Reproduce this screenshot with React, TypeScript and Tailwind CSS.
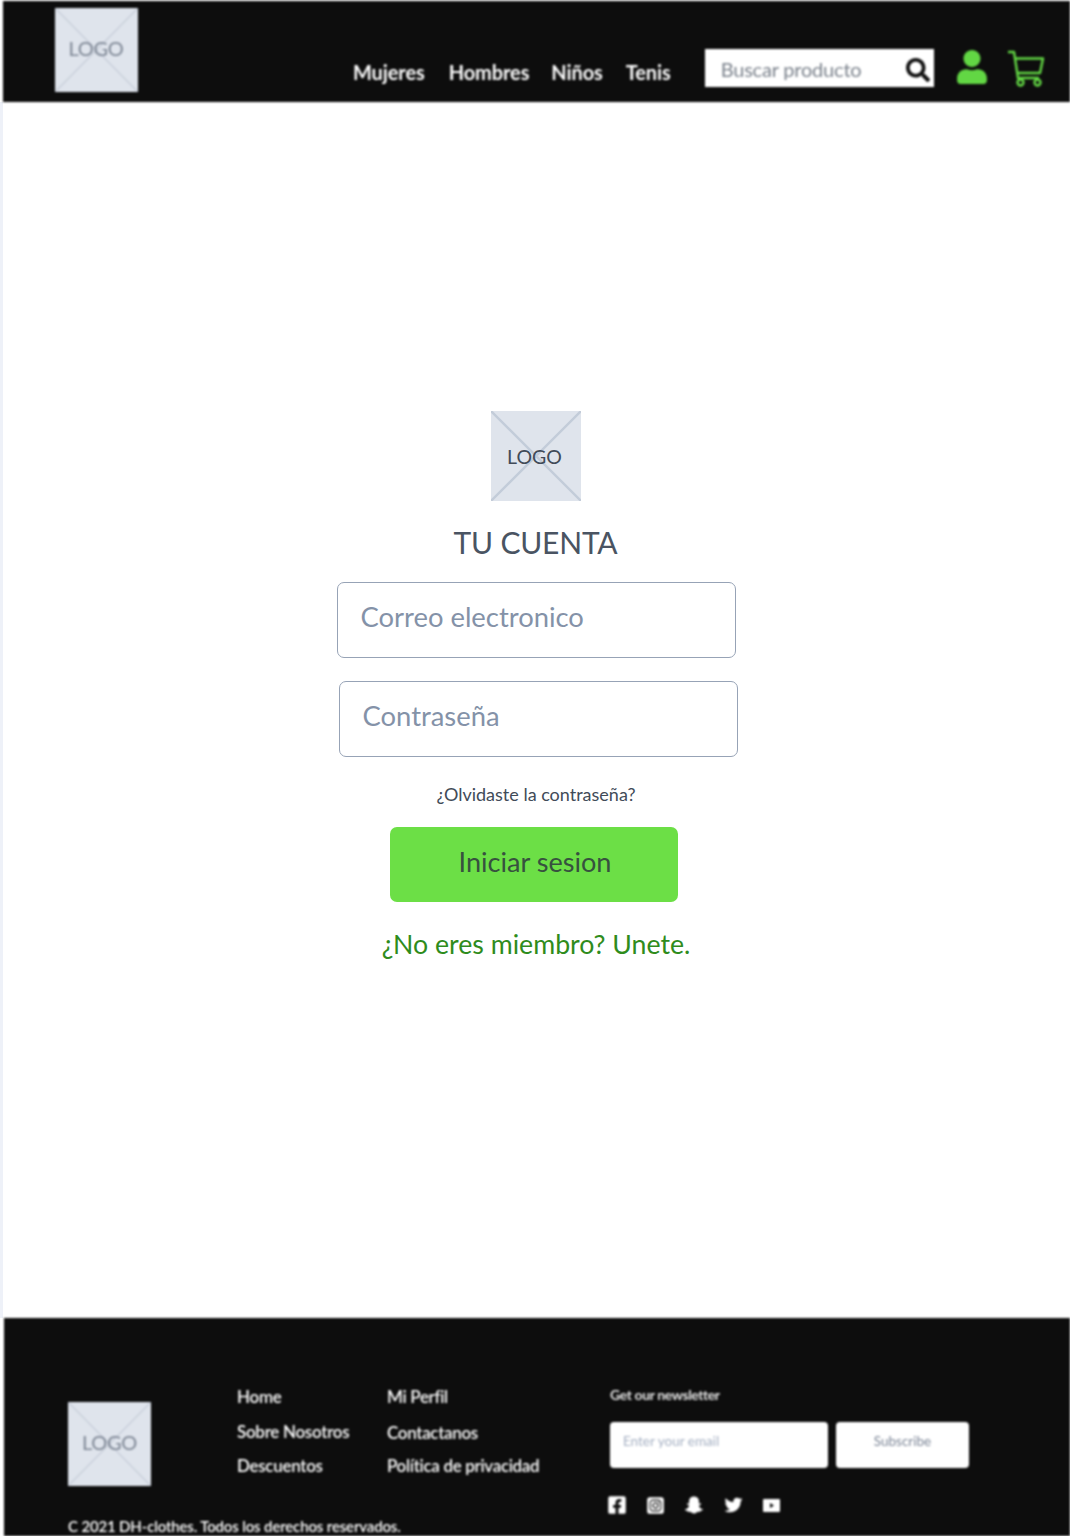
import React from 'react';
import { FaSearch, FaUser, FaFacebookSquare, FaSnapchatGhost, FaTwitter } from 'react-icons/fa';
import { FaSquareInstagram } from 'react-icons/fa6';

const LogoBox: React.FC<{ className: string; textClass: string; lineClass: string; lineWidth?: number }> = ({ className, textClass, lineClass, lineWidth = 1.4 }) => (
    <div className={`relative flex items-center justify-center bg-[#dfe4ec] ${className}`}>
        <svg className={`absolute inset-0 h-full w-full ${lineClass}`} viewBox="0 0 100 100" preserveAspectRatio="none" fill="none" stroke="currentColor" strokeWidth={lineWidth}>
            <path d="M0 0L100 100M100 0L0 100" />
        </svg>
        <span className={`relative ${textClass}`}>LOGO</span>
    </div>
);

const CartIcon: React.FC = () => (
    <svg className="h-[38px] w-[38px] text-[#62d744]" viewBox="0 0 38 38" fill="none" stroke="currentColor" strokeWidth="2.4">
        <path d="M1 2h6l4 26h21" strokeLinejoin="round" />
        <path d="M8 8.500h28l-3 14.500H10.500" strokeLinejoin="round" />
        <circle cx="13.500" cy="32.500" r="3" />
        <circle cx="30.500" cy="32.500" r="3" />
    </svg>
);

const YoutubeIcon: React.FC = () => (
    <svg className="h-[13px] w-[17px] text-white" viewBox="0 0 17 13" fill="currentColor">
        <path fillRule="evenodd" d="M1 0h15a1 1 0 011 1v11a1 1 0 01-1 1H1a1 1 0 01-1-1V1a1 1 0 011-1zm6 4v5l4-2.500z" clipRule="evenodd" />
    </svg>
);

const navItems = [
    { label: 'Mujeres', cls: 'ml-[215px]' },
    { label: 'Hombres', cls: 'ml-[24px]' },
    { label: 'Niños', cls: 'ml-[22px]' },
    { label: 'Tenis', cls: 'ml-[23px]' },
];

const Header: React.FC = () => (
    <header className="ml-[3px] mt-[1px] flex h-[101px] shrink-0 bg-[#0d0d0d] blur-[1px]">
        <LogoBox
            className="ml-[52px] mt-[7px] h-[84px] w-[83px] shrink-0"
            textClass="mb-[4px] ml-[-1px] text-[20px] tracking-[-0.3px] text-[#7d8694]"
            lineClass="text-[#c3cad6]"
        />
        <nav className="flex h-[101px] items-center pt-[41px]">
            {navItems.map((n) => (
                <a key={n.label} className={`${n.cls} text-[20px] font-bold tracking-[-0.1px] text-white`}>{n.label}</a>
            ))}
        </nav>
        <div className="ml-[34px] mt-[48px] flex h-[38px] w-[229px] items-center justify-between bg-white pl-[16px] pr-[4px]">
            <span className="mt-[2px] text-[20px] tracking-[-0.2px] text-[#7b828c]">Buscar producto</span>
            <FaSearch className="mt-[4px] h-[24px] w-[24px] text-[#111111]" />
        </div>
        <FaUser className="ml-[23px] mt-[49px] h-[34px] w-[30px] text-[#62d744]" />
        <div className="ml-[20px] mt-[49px]">
            <CartIcon />
        </div>
    </header>
);

const Login: React.FC = () => (
    <main className="flex flex-1 flex-col items-center border-l-[3px] border-[#eef1f8] bg-white pt-[309px]">
        <LogoBox
            className="ml-[-2px] h-[90px] w-[90px]"
            textClass="ml-[-2px] mt-[2px] text-[19.5px] text-[#414b58]"
            lineClass="text-[#c3ccd9]"
            lineWidth={2.6}
        />
        <h1 className="ml-[-2px] mt-[21px] text-[30px] leading-[40px] tracking-[-0.2px] text-[#4a5462]">TU CUENTA</h1>
        <div className="ml-[-1px] mt-[20px] flex h-[76px] w-[399px] items-center rounded-[7px] border-[1.5px] border-[#97a3b6] px-[23px] pb-[6px] text-[27.4px] text-[#8492a8]">
            Correo electronico
        </div>
        <div className="ml-[3px] mt-[23px] flex h-[76px] w-[399px] items-center rounded-[7px] border-[1.5px] border-[#97a3b6] px-[23px] pb-[6px] text-[27.4px] text-[#8492a8]">
            Contraseña
        </div>
        <a className="ml-[-1px] mt-[25px] text-[18px] leading-[24px] text-[#414b58]">¿Olvidaste la contraseña?</a>
        <button className="ml-[-5px] mt-[21px] h-[75px] w-[288px] rounded-[7px] bg-[#6cdf46] pl-[2px] pb-[4px] text-[27.1px] text-[#37513f]">Iniciar sesion</button>
        <a className="ml-[-1px] mt-[24px] text-[26.7px] leading-[36px] text-[#2f8c1c]">¿No eres miembro? Unete.</a>
    </main>
);

const Footer: React.FC = () => (
    <footer className="ml-[4px] flex h-[218px] shrink-0 flex-col bg-[#0d0d0d] pl-[64px] blur-[1px]">
        <div className="flex">
            <LogoBox
                className="mt-[84px] h-[84px] w-[83px] shrink-0"
                textClass="mb-[4px] text-[20px] tracking-[-0.3px] text-[#7d8694]"
                lineClass="text-[#c3cad6]"
            />
            <div className="ml-[86px] mt-[67px] flex w-[150px] flex-col gap-[11.5px] text-[17px] font-semibold leading-[23px] tracking-[-0.3px] text-white">
                <a>Home</a>
                <a>Sobre Nosotros</a>
                <a>Descuentos</a>
            </div>
            <div className="mt-[67px] flex w-[223px] flex-col gap-[11.5px] text-[17px] font-semibold leading-[23px] tracking-[-0.33px] text-white">
                <a>Mi Perfil</a>
                <a className="mb-[-1px] mt-[1px]">Contactanos</a>
                <a>Política de privacidad</a>
            </div>
            <div className="mt-[68px] flex flex-col">
                <p className="text-[14px] font-bold leading-[18px] tracking-[-0.4px] text-[#e6e6e6]">Get our newsletter</p>
                <div className="mt-[18px] flex gap-[8px]">
                    <div className="flex h-[46px] w-[218px] rounded-[4px] bg-white pl-[13px] pt-[10px] text-[13.5px] leading-[18px] text-[#a4afc2]">Enter your email</div>
                    <div className="flex h-[46px] w-[133px] items-center justify-center rounded-[4px] bg-white pb-[8px] text-[13.5px] text-[#7b8596]">Subscribe</div>
                </div>
                <div className="ml-[-3px] mt-[27px] flex items-center text-white">
                    <FaFacebookSquare className="h-[20px] w-[20px]" />
                    <FaSquareInstagram className="ml-[19px] h-[19px] w-[19px]" />
                    <FaSnapchatGhost className="ml-[20px] h-[18px] w-[18px]" />
                    <FaTwitter className="ml-[21px] h-[18px] w-[19px]" />
                    <div className="ml-[20px]"><YoutubeIcon /></div>
                </div>
            </div>
        </div>
        <p className="mt-[1px] text-[15px] font-semibold leading-[20px] tracking-[-0.16px] text-white">C 2021 DH-clothes. Todos los derechos reservados.</p>
    </footer>
);

const App: React.FC = () => (
    <div className="flex h-[1536px] w-[1070px] flex-col overflow-hidden bg-white font-['Lato',sans-serif]">
        <Header />
        <Login />
        <Footer />
    </div>
);

export default App;
